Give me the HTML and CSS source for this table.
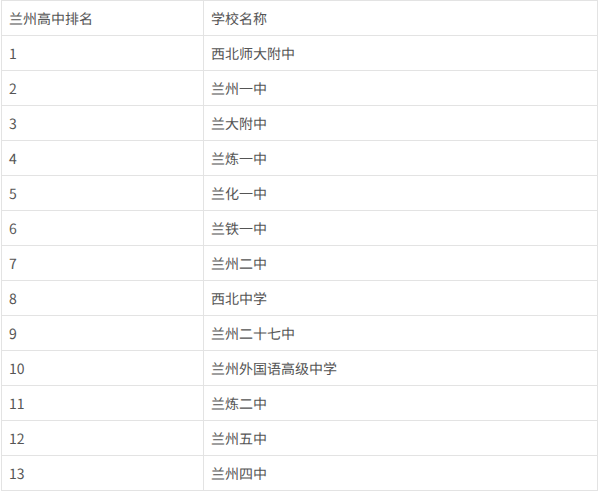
FILE: index.html
```html
<!DOCTYPE html>
<html lang="zh-CN">
<head>
<meta charset="utf-8">
<link rel="stylesheet" href="styles.css">
</head>
<body>
<table class="rank-table">
  <tr><td class="c1">兰州高中排名</td><td>学校名称</td></tr>
  <tr><td class="c1">1</td><td>西北师大附中</td></tr>
  <tr><td class="c1">2</td><td>兰州一中</td></tr>
  <tr><td class="c1">3</td><td>兰大附中</td></tr>
  <tr><td class="c1">4</td><td>兰炼一中</td></tr>
  <tr><td class="c1">5</td><td>兰化一中</td></tr>
  <tr><td class="c1">6</td><td>兰铁一中</td></tr>
  <tr><td class="c1">7</td><td>兰州二中</td></tr>
  <tr><td class="c1">8</td><td>西北中学</td></tr>
  <tr><td class="c1">9</td><td>兰州二十七中</td></tr>
  <tr><td class="c1">10</td><td>兰州外国语高级中学</td></tr>
  <tr><td class="c1">11</td><td>兰炼二中</td></tr>
  <tr><td class="c1">12</td><td>兰州五中</td></tr>
  <tr><td class="c1">13</td><td>兰州四中</td></tr>
</table>
</body>
</html>
```
FILE: styles.css
```css
html, body {
  margin: 0;
  padding: 0;
  background: #fff;
}
body {
  padding-left: 1px;
}
.rank-table {
  border-collapse: collapse;
  width: 597px;
  font-family: "Noto Sans CJK SC", "Noto Sans", sans-serif;
  font-size: 14px;
  color: #555;
  -webkit-font-smoothing: antialiased;
  text-rendering: geometricPrecision;
}
.rank-table td {
  border: 1px solid #e3e3e3;
  padding: 1px 7px 0;
  box-sizing: border-box;
  height: 35px;
  vertical-align: middle;
  line-height: 1;
}
.rank-table td.c1 {
  width: 202px;
}
```
